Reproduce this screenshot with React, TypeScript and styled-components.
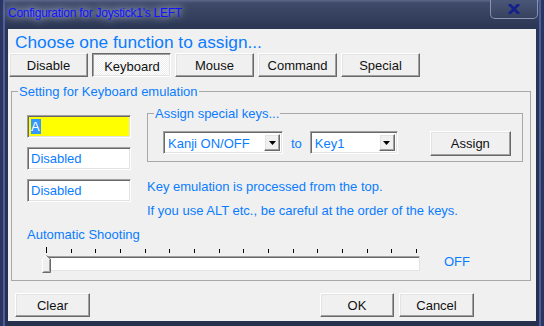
import styled, { createGlobalStyle, css } from "styled-components";

const BLUE = "#0a7cff";
const FONT = `"Liberation Sans", Arial, sans-serif`;

const GlobalStyle = createGlobalStyle`
  html, body {
    margin: 0;
    padding: 0;
    background: #1e2845;
  }
  body {
    font-family: ${FONT};
  }
`;

const Window = styled.div`
  width: 544px;
  height: 326px;
  box-sizing: border-box;
  display: flex;
  flex-direction: column;
  background: linear-gradient(
    to bottom,
    #5d6888 0px,
    #3f4a6b 3px,
    #36425f 14px,
    #2b3654 28px,
    #26304d 100%
  );
  box-shadow: inset 3px 0 0 #2a3660, inset 5px 0 0 #4d5e9c,
    inset -3px 0 0 #2a3660, inset -5px 0 0 #4d5e9c;
  overflow: hidden;
`;

const TitleBar = styled.div`
  height: 29px;
  flex: none;
  display: flex;
  align-items: flex-start;
  padding: 0 6px 0 8px;
`;

const Title = styled.div`
  margin-top: 6px;
  font-size: 12px;
  line-height: 15px;
  letter-spacing: -0.25px;
  color: #1212ff;
  white-space: nowrap;
  text-shadow: 0 0 6px rgba(215, 222, 240, 0.95), 0 0 12px rgba(200, 208, 230, 0.8);
`;

const CloseButton = styled.div`
  margin-left: auto;
  width: 48px;
  height: 19px;
  box-sizing: border-box;
  border: 1px solid rgba(175, 185, 210, 0.65);
  border-top: none;
  border-radius: 0 0 5px 5px;
  background: linear-gradient(to bottom, #4a5677, #37425f);
  display: flex;
  align-items: center;
  justify-content: center;
`;

const Client = styled.div`
  flex: 1;
  margin: 0 8px 5px 8px;
  background: #f0f0f0;
  display: flex;
  flex-direction: column;
  padding-bottom: 4px;
`;

const Heading = styled.div`
  margin: 3px 0 0 7px;
  height: 20px;
  font-size: 17.3px;
  line-height: 20px;
  color: ${BLUE};
  white-space: nowrap;
`;

const TabRow = styled.div`
  margin: 1px 0 0 1px;
  display: flex;
  gap: 4px;
`;

const raised = css`
  border: 1px solid;
  border-color: #ffffff #696969 #696969 #ffffff;
  box-shadow: inset -1px -1px 0 #a0a0a0, inset 1px 1px 0 #e3e3e3;
  background: #f0f0f0;
`;

const sunkenButton = css`
  border: 1px solid;
  border-color: #696969 #ffffff #ffffff #696969;
  box-shadow: inset 1px 1px 0 #a0a0a0, inset -1px -1px 0 #e3e3e3;
  background: repeating-conic-gradient(#ffffff 0 25%, #eeeeee 0 50%) 0 0 / 2px 2px;
  padding: 2px 0 0 1px;
`;

const Button = styled.div<{ $w: number; $h?: number; $pressed?: boolean }>`
  width: ${(p) => p.$w}px;
  height: ${(p) => p.$h ?? 24}px;
  box-sizing: border-box;
  display: flex;
  align-items: center;
  justify-content: center;
  font-size: 13px;
  font-weight: 400;
  color: #111;
  white-space: nowrap;
  ${(p) => (p.$pressed ? sunkenButton : raised)}
`;

const GroupBox = styled.fieldset<{ $w: number; $pb?: number }>`
  margin: 0;
  padding: 0 0 ${(p) => p.$pb ?? 0}px 0;
  width: ${(p) => p.$w}px;
  box-sizing: border-box;
  border: 1px solid #a8a8a8;
  min-width: 0;
`;

const OuterGroup = styled(GroupBox)`
  margin: 7px 0 0 3px;
`;

const Legend = styled.legend`
  margin-left: 6px;
  padding: 0 1px;
  font-size: 13px;
  line-height: 15px;
  color: ${BLUE};
  white-space: nowrap;
`;

const TopSection = styled.div`
  margin-top: 7px;
  padding-left: 15px;
  display: flex;
  gap: 16px;
`;

const FieldColumn = styled.div`
  padding-top: 9px;
  display: flex;
  flex-direction: column;
  gap: 9px;
`;

const sunken = css`
  border: 1px solid;
  border-color: #a0a0a0 #ffffff #ffffff #a0a0a0;
  box-shadow: inset 1px 1px 0 #696969, inset -1px -1px 0 #e3e3e3;
`;

const EditBox = styled.div<{ $bg?: string }>`
  width: 104px;
  height: 23px;
  box-sizing: border-box;
  ${sunken}
  background: ${(p) => p.$bg ?? "#ffffff"};
  padding: 2px 0 0 3px;
  font-size: 13px;
  line-height: 17px;
  color: ${BLUE};
`;

const Selected = styled.span`
  background: #3399ff;
  color: #ffffff;
  padding: 0 1px 0 0;
`;

const RightColumn = styled.div`
  display: flex;
  flex-direction: column;
`;

const ComboRow = styled.div`
  margin-top: 10px;
  padding-left: 15px;
  display: flex;
  align-items: flex-start;
`;

const Combo = styled.div<{ $w: number }>`
  width: ${(p) => p.$w}px;
  height: 23px;
  box-sizing: border-box;
  ${sunken}
  background: #ffffff;
  display: flex;
  padding: 2px;
`;

const ComboText = styled.div`
  flex: 1;
  padding-left: 2px;
  font-size: 13px;
  line-height: 19px;
  color: ${BLUE};
  white-space: nowrap;
`;

const ComboArrow = styled.div`
  width: 16px;
  box-sizing: border-box;
  ${raised}
  display: flex;
  align-items: center;
  justify-content: center;
`;

const ToLabel = styled.div`
  align-self: center;
  margin: 0 8px;
  font-size: 13px;
  line-height: 16px;
  color: ${BLUE};
`;

const AssignButton = styled(Button)`
  margin-left: 32px;
`;

const Note = styled.div<{ $mt: number }>`
  margin-top: ${(p) => p.$mt}px;
  font-size: 13px;
  line-height: 16px;
  color: ${BLUE};
  white-space: nowrap;
`;

const ShootLabel = styled.div`
  margin: 8px 0 0 15px;
  font-size: 13px;
  line-height: 16px;
  color: ${BLUE};
`;

const SliderRow = styled.div`
  margin: 4px 0 0 30px;
  display: flex;
  align-items: flex-end;
`;

const Slider = styled.div`
  position: relative;
  width: 378px;
  display: flex;
  flex-direction: column;
`;

const Ticks = styled.div`
  height: 6px;
  padding: 0 3px 0 4px;
  display: flex;
  justify-content: space-between;
  align-items: flex-end;
`;

const Tick = styled.div<{ $major?: boolean }>`
  width: 1px;
  height: ${(p) => (p.$major ? 6 : 4)}px;
  background: #000;
`;

const Track = styled.div`
  margin: 3px 0 0 6px;
  height: 15px;
  box-sizing: border-box;
  border: 1px solid;
  border-color: #a0a0a0 #e3e3e3 #e3e3e3 #a0a0a0;
  box-shadow: inset 1px 1px 0 #696969;
  background: #ffffff;
`;

const Thumb = styled.svg`
  position: absolute;
  left: 0;
  top: 8px;
`;

const OffLabel = styled.div`
  margin: 0 0 1px 24px;
  font-size: 13px;
  line-height: 16px;
  color: ${BLUE};
`;

const Footer = styled.div`
  margin: 12px 62px 0 7px;
  display: flex;
  gap: 5px;
`;

const Spacer = styled.div`
  flex: 1;
`;

function DropArrow() {
  return (
    <svg width="7" height="4" viewBox="0 0 7 4">
      <path d="M0 0 H7 L3.5 4 Z" fill="#000" />
    </svg>
  );
}

const tabs = ["Disable", "Keyboard", "Mouse", "Command", "Special"];

export default function App() {
  return (
    <>
      <GlobalStyle />
      <Window>
        <TitleBar>
          <Title>Configuration for Joystick1's LEFT</Title>
          <CloseButton>
            <svg width="12" height="10" viewBox="0 0 12 10">
              <path
                d="M2 1 L10 9 M10 1 L2 9"
                stroke="#14208c"
                strokeWidth="2.8"
                strokeLinecap="square"
              />
            </svg>
          </CloseButton>
        </TitleBar>
        <Client>
          <Heading>Choose one function to assign...</Heading>
          <TabRow>
            {tabs.map((t) => (
              <Button key={t} $w={79} $pressed={t === "Keyboard"}>
                {t}
              </Button>
            ))}
          </TabRow>
          <OuterGroup $w={520} $pb={9}>
            <Legend>Setting for Keyboard emulation</Legend>
            <TopSection>
              <FieldColumn>
                <EditBox $bg="#ffff00">
                  <Selected>A</Selected>
                </EditBox>
                <EditBox>Disabled</EditBox>
                <EditBox>Disabled</EditBox>
              </FieldColumn>
              <RightColumn>
                <GroupBox $w={376} $pb={5}>
                  <Legend>Assign special keys...</Legend>
                  <ComboRow>
                    <Combo $w={120}>
                      <ComboText>Kanji ON/OFF</ComboText>
                      <ComboArrow>
                        <DropArrow />
                      </ComboArrow>
                    </Combo>
                    <ToLabel>to</ToLabel>
                    <Combo $w={88}>
                      <ComboText>Key1</ComboText>
                      <ComboArrow>
                        <DropArrow />
                      </ComboArrow>
                    </Combo>
                    <AssignButton $w={81} $h={25}>
                      Assign
                    </AssignButton>
                  </ComboRow>
                </GroupBox>
                <Note $mt={17}>Key emulation is processed from the top.</Note>
                <Note $mt={8}>
                  If you use ALT etc., be careful at the order of the keys.
                </Note>
              </RightColumn>
            </TopSection>
            <ShootLabel>Automatic Shooting</ShootLabel>
            <SliderRow>
              <Slider>
                <Ticks>
                  {Array.from({ length: 16 }, (_, i) => (
                    <Tick key={i} $major={i === 0} />
                  ))}
                </Ticks>
                <Track />
                <Thumb width="9" height="18" viewBox="0 0 9 18">
                  <path d="M0.5 17.5 V4 L4.5 0.5 L8.5 4 V17.5 Z" fill="#f0f0f0" />
                  <path d="M0.5 17 V4 L4.5 0.5" fill="none" stroke="#ffffff" />
                  <path d="M4.5 0.5 L8.5 4 V17.5 H0.5" fill="none" stroke="#696969" />
                  <path d="M7.5 4.5 V16.5 H1.5" fill="none" stroke="#a0a0a0" />
                </Thumb>
              </Slider>
              <OffLabel>OFF</OffLabel>
            </SliderRow>
          </OuterGroup>
          <Footer>
            <Button $w={75}>Clear</Button>
            <Spacer />
            <Button $w={74}>OK</Button>
            <Button $w={75}>Cancel</Button>
          </Footer>
        </Client>
      </Window>
    </>
  );
}
